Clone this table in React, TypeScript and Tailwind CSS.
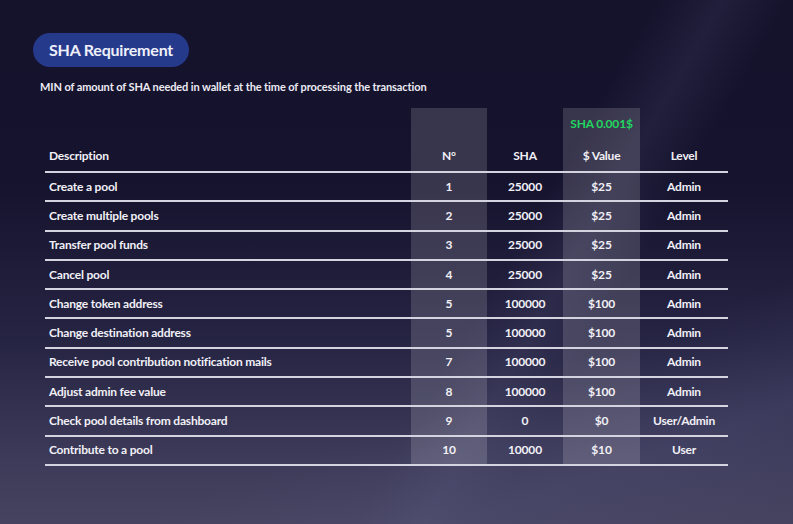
import React from 'react';

interface Row {
  description: string;
  no: number;
  sha: string;
  value: string;
  level: string;
}

const rows: Row[] = [
  { description: 'Create a pool', no: 1, sha: '25000', value: '$25', level: 'Admin' },
  { description: 'Create multiple pools', no: 2, sha: '25000', value: '$25', level: 'Admin' },
  { description: 'Transfer pool funds', no: 3, sha: '25000', value: '$25', level: 'Admin' },
  { description: 'Cancel pool', no: 4, sha: '25000', value: '$25', level: 'Admin' },
  { description: 'Change token address', no: 5, sha: '100000', value: '$100', level: 'Admin' },
  { description: 'Change destination address', no: 5, sha: '100000', value: '$100', level: 'Admin' },
  { description: 'Receive pool contribution notification mails', no: 7, sha: '100000', value: '$100', level: 'Admin' },
  { description: 'Adjust admin fee value', no: 8, sha: '100000', value: '$100', level: 'Admin' },
  { description: 'Check pool details from dashboard', no: 9, sha: '0', value: '$0', level: 'User/Admin' },
  { description: 'Contribute to a pool', no: 10, sha: '10000', value: '$10', level: 'User' },
];

const cols = 'grid grid-cols-[366px_76px_76px_77px_88px]';

export default function App() {
  return (
    <div className="relative h-[524px] w-[793px] overflow-hidden bg-[linear-gradient(180deg,#15122c_0%,#16132e_35%,#262443_65%,#3d3b59_88%,#45435f_100%)] font-['Lato','Noto_Sans',sans-serif] text-white">
      <div className="h-full w-full bg-[linear-gradient(120deg,transparent_60%,rgba(110,108,150,0.14)_66%,transparent_72%),linear-gradient(160deg,transparent_70%,rgba(90,88,130,0.25)_85%,transparent_100%)] pl-[33px] pt-[33px]">
        <div className="inline-flex h-[34px] items-center rounded-full bg-[#263a8c] px-[16px] text-[16px] font-bold tracking-[-0.2px] text-[#eef0fa]">
          SHA Requirement
        </div>

        <p className="ml-[7px] mt-[13px] text-[11px] font-bold leading-[14px] tracking-[-0.1px] text-[#ecebf3]">
          MIN of amount of SHA needed in wallet at the time of processing the transaction
        </p>

        <div className="ml-[12px] mt-[14px] w-[683px] text-[12px] font-bold tracking-[-0.2px] text-[#f1f0f6]">
          <div className={`${cols} h-[32px]`}>
            <div />
            <div className="bg-white/15" />
            <div />
            <div className="flex items-center justify-center bg-white/15 text-[#22d760]">SHA 0.001$</div>
            <div />
          </div>
          <div className={`${cols} h-[33px] border-b-2 border-[#d4d3e0]`}>
            <div className="flex items-center pl-[4px]">Description</div>
            <div className="flex items-center justify-center bg-white/15">N°</div>
            <div className="flex items-center justify-center">SHA</div>
            <div className="flex items-center justify-center bg-white/15">$ Value</div>
            <div className="flex items-center justify-center">Level</div>
          </div>
          {rows.map((r, i) => (
            <div key={i} className={`${cols} h-[29.3px] border-b-2 border-[#d4d3e0]`}>
              <div className="flex items-center pl-[4px]">{r.description}</div>
              <div className="flex items-center justify-center bg-white/15">{r.no}</div>
              <div className="flex items-center justify-center">{r.sha}</div>
              <div className="flex items-center justify-center bg-white/15">{r.value}</div>
              <div className="flex items-center justify-center">{r.level}</div>
            </div>
          ))}
        </div>
      </div>
    </div>
  );
}
